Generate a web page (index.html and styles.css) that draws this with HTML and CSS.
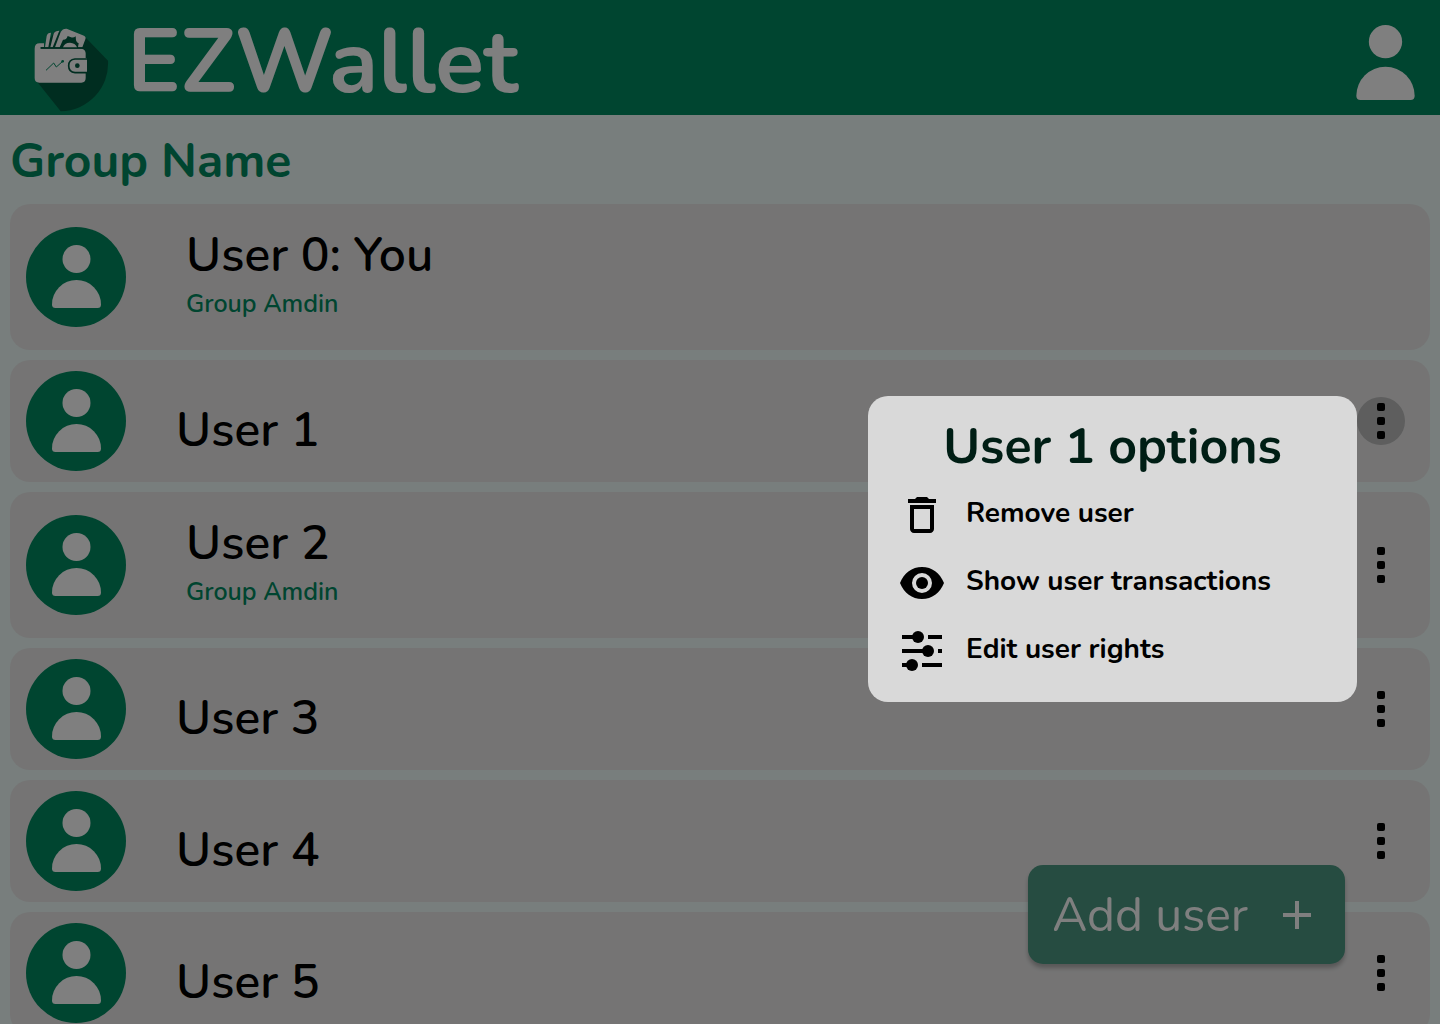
FILE: index.html
```
<!DOCTYPE html>
<html lang="en">
<head>
<meta charset="utf-8">
<meta name="viewport" content="width=device-width, initial-scale=1">
<title>EZWallet</title>
<link rel="stylesheet" href="styles.css">
</head>
<body>
<svg class="sprite" aria-hidden="true">
  <symbol id="person" viewBox="25 18 49 63"><circle cx="49.5" cy="32" r="14"/><path d="M25 77.500A24.500 24.500 0 0 1 74 77.500Q74 81 70.500 81H28.500Q25 81 25 77.500z"/></symbol>
  <symbol id="dots" viewBox="0 0 48 48"><rect x="20" y="6" width="8" height="8" rx="2"/><rect x="20" y="20" width="8" height="8" rx="2"/><rect x="20" y="34" width="8" height="8" rx="2"/></symbol>
</svg>
<div class="app">
  <header class="topbar">
    <a class="brand" href="#">
      <svg class="logo" viewBox="102 82 225 252" aria-hidden="true">
        <path class="logo-shade" d="M112 244L182 332A144 144 0 0 0 324 180L256 110L240 140z"/>
        <path class="logo-shade" d="M124 144V139H134L166 90L250 110L246 145z"/>
        <path d="M104 144Q104 128 119 128H132V139H122V144H244Q257 146 257 158V173H261V217H257V232Q257 246 244 246H118Q104 246 104 232z"/>
        <path d="M135 140L140 106Q142 96 153 96L145 140zM151 140L161 99Q164 90 178 90L158 140zM165 140L182 94Q188 83 200 84L252 105Q259 109 256 116L247 140z"/>
        <path class="logo-shade" d="M122 140H250V144H122zM179 140L189 117Q200 118 203 106L213 110Q221 112 227 107L228 119Q230 126 236 128L234 140z"/>
        <path d="M189 140Q193 126 210 126Q226 127 231 140z"/>
        <path class="logo-line" d="M138 209L161 187L169 199L188 182"/>
        <circle class="logo-cut" cx="188" cy="182" r="4"/>
        <path class="logo-clasp" d="M262 175H225Q206 177 206 195Q206 214 225 216H262"/>
        <circle class="logo-dot" cx="232" cy="195" r="7"/>
      </svg>
      <span class="brand-name">EZWallet</span>
    </a>
    <button class="profile" aria-label="Profile"><svg class="profile-icon"><use href="#person"/></svg></button>
  </header>
  <main class="content">
    <h1 class="group-name">Group Name</h1>
    <ul class="users">
      <li class="user user-admin">
        <span class="avatar"><svg class="avatar-icon"><use href="#person"/></svg></span>
        <div class="info"><h2 class="name">User 0: You</h2><p class="role">Group Amdin</p></div>
      </li>
      <li class="user">
        <span class="avatar"><svg class="avatar-icon"><use href="#person"/></svg></span>
        <div class="info"><h2 class="name">User 1</h2></div>
        <button class="menu menu-open" aria-label="User 1 options" aria-expanded="true"><svg class="menu-icon"><use href="#dots"/></svg></button>
        <section class="options" role="dialog" aria-labelledby="options-title">
          <h2 class="options-title" id="options-title">User 1 options</h2>
          <button class="option">
            <svg class="option-icon" viewBox="0 0 24 24"><path d="M6 19c0 1.100.9 2 2 2h8c1.100 0 2-.9 2-2V7H6v12zM8 9h8v10H8V9zm7.500-5l-1-1h-5l-1 1H5v2h14V4z"/></svg>
            <span class="option-label">Remove user</span>
          </button>
          <button class="option">
            <svg class="option-icon" viewBox="0 0 24 24"><path fill-rule="evenodd" d="M12 4C7 4 3 7 1 12C3 17 7 20 12 20S21 17 23 12C21 7 17 4 12 4zM12 17a5 5 0 1 1 0-10a5 5 0 0 1 0 10z"/><circle cx="12" cy="12" r="3"/></svg>
            <span class="option-label">Show user transactions</span>
          </button>
          <button class="option">
            <svg class="option-icon" viewBox="0 0 24 24"><path d="M2 4H10V6H2zM15 4H22V6H15zM2 11H15V13H2zM20 11H22V13H20zM2 18H7V20H2zM12 18H22V20H12z"/><circle cx="10" cy="5" r="3"/><circle cx="15" cy="12" r="3"/><circle cx="7" cy="19" r="3"/></svg>
            <span class="option-label">Edit user rights</span>
          </button>
        </section>
      </li>
      <li class="user user-admin">
        <span class="avatar"><svg class="avatar-icon"><use href="#person"/></svg></span>
        <div class="info"><h2 class="name">User 2</h2><p class="role">Group Amdin</p></div>
        <button class="menu" aria-label="User 2 options"><svg class="menu-icon"><use href="#dots"/></svg></button>
      </li>
      <li class="user">
        <span class="avatar"><svg class="avatar-icon"><use href="#person"/></svg></span>
        <div class="info"><h2 class="name">User 3</h2></div>
        <button class="menu" aria-label="User 3 options"><svg class="menu-icon"><use href="#dots"/></svg></button>
      </li>
      <li class="user">
        <span class="avatar"><svg class="avatar-icon"><use href="#person"/></svg></span>
        <div class="info"><h2 class="name">User 4</h2></div>
        <button class="menu" aria-label="User 4 options"><svg class="menu-icon"><use href="#dots"/></svg></button>
      </li>
      <li class="user">
        <span class="avatar"><svg class="avatar-icon"><use href="#person"/></svg></span>
        <div class="info"><h2 class="name">User 5</h2></div>
        <button class="menu" aria-label="User 5 options"><svg class="menu-icon"><use href="#dots"/></svg></button>
      </li>
    </ul>
  </main>
  <button class="add"><span>Add user</span><svg class="add-icon" viewBox="0 0 28 28" aria-hidden="true"><path d="M12 0H16V12H28V16H16V28H12V16H0V12H12z"/></svg></button>
  <div class="backdrop"></div>
</div>
</body>
</html>
```
FILE: styles.css
```
* { box-sizing: border-box; }

body {
  margin: 0;
  font-family: Nunito, Lato, sans-serif;
  color: #000;
  background: #f0fcfa;
}

h1, h2, p, ul { margin: 0; padding: 0; }
button { border: 0; padding: 0; background: none; font: inherit; color: inherit; cursor: pointer; }
svg { display: block; fill: currentColor; }
.sprite { display: none; }

.app {
  display: flex;
  flex-direction: column;
  height: 100vh;
  overflow: hidden;
}

.topbar {
  flex: none;
  display: flex;
  align-items: center;
  justify-content: space-between;
  min-height: 115px;
  padding: 0 25px 0 34px;
  background: #008a60;
  color: #fff;
}

.brand { display: flex; align-items: center; gap: 18px; color: inherit; text-decoration: none; }
.logo { width: 75px; height: 84px; margin-top: 24px; }
.logo-shade { fill: #005a40; }
.logo-cut { fill: #008a60; }
.logo-dot { fill: #005a40; }
.logo-line { fill: none; stroke: #008a60; stroke-width: 3; }
.logo-clasp { fill: none; stroke: #005a40; stroke-width: 5; }
.brand-name { padding-top: 10px; font-size: 90px; line-height: 105px; font-weight: 700; }
.profile { margin-top: 10px; }
.profile-icon { width: 59px; height: 75px; }

.content { flex: 1; min-height: 0; padding: 16px 10px; overflow-y: auto; scrollbar-width: none; }
.group-name { font-size: 48px; line-height: 60px; font-weight: 700; color: #008a60; }

.users { display: flex; flex-direction: column; gap: 10px; margin-top: 13px; list-style: none; }
.user {
  position: relative;
  display: flex;
  align-items: center;
  min-height: 122px;
  padding: 11px 25px 11px 16px;
  border-radius: 20px;
  background: #eae9e9;
}
.user-admin { min-height: 146px; }
.avatar {
  display: grid;
  justify-content: center;
  width: 100px;
  height: 100px;
  padding-top: 18px;
  border-radius: 50%;
  background: #008a60;
  color: #fff;
}
.avatar-icon { width: 49px; height: 63px; }
.info { flex: 1; padding: 18px 0 0 50px; }
.user-admin .info { padding: 0 0 6px 60px; }
.name { font-size: 48px; line-height: 60px; font-weight: 600; }
.role { font-size: 25px; line-height: 38px; font-weight: 600; color: #008a60; }
.menu { width: 48px; height: 48px; border-radius: 50%; }
.menu-open { background: #bcbcbc; }
.menu-icon { width: 48px; height: 48px; }

.options {
  position: absolute;
  z-index: 2;
  top: 36px;
  right: 73px;
  display: flex;
  flex-direction: column;
  gap: 20px;
  width: 489px;
  padding: 20px 30px 27px;
  border-radius: 20px;
  background: #d9d9d9;
}
.options-title { height: 55px; font-size: 50px; line-height: 62px; font-weight: 700; text-align: center; color: #001e15; }
.option { display: flex; align-items: center; gap: 20px; text-align: left; }
.option-icon { width: 48px; height: 48px; }
.option-label { padding-bottom: 4px; font-size: 28px; line-height: 36px; font-weight: 700; }

.add {
  position: fixed;
  right: 95px;
  bottom: 60px;
  display: flex;
  align-items: center;
  gap: 35px;
  height: 99px;
  padding: 0 34px 0 24px;
  border-radius: 15px;
  background: #4c9882;
  box-shadow: 0 4px 4px rgba(0, 0, 0, 0.25);
  color: #fff;
  font-size: 48px;
  line-height: 60px;
}
.add-icon { width: 28px; height: 28px; }

.backdrop { position: fixed; inset: 0; z-index: 1; background: rgba(0, 0, 0, 0.5); }
```
